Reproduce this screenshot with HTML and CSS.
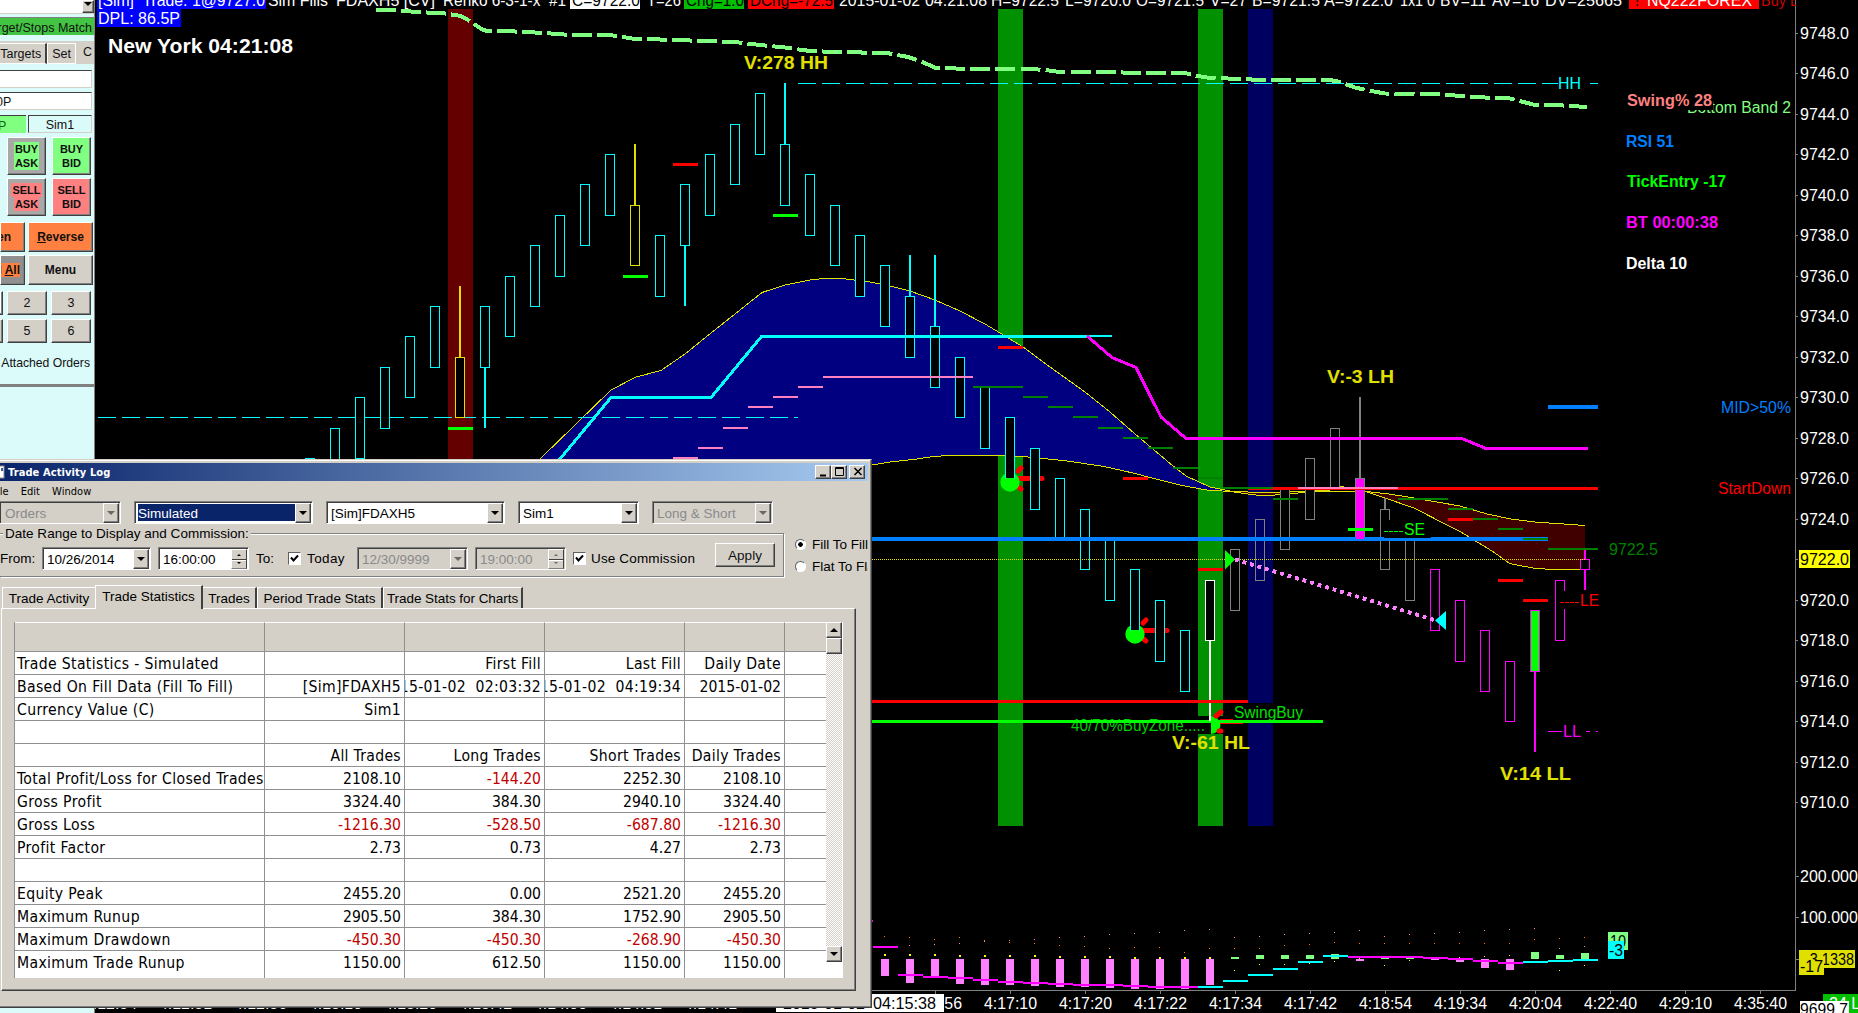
FILE: index.html
```html
<!DOCTYPE html>
<html lang="en">
<head>
  <meta charset="UTF-8">
  <meta name="viewport" content="width=device-width, initial-scale=1.0">
  <title>Trade Activity Log</title>
  <link rel="stylesheet" href="styles.css">
</head>
<body>
  <div class="workspace">

    <!-- Order entry panel -->
    <div class="order-panel">
      <div class="symbol-row"><span class="arrow-btn"><i class="down"></i></span></div>
      <div class="match-bar">Target/Stops Match</div>
      <div class="mini-tabs">
        <span class="mini-tab">Targets</span>
        <span class="mini-tab">Set</span>
        <span class="mini-tab current">C</span>
      </div>
      <div class="field"></div>
      <div class="field">0P</div>
      <div class="account-row">
        <span class="profit">P</span>
        <span class="account">Sim1</span>
      </div>
      <div class="pair">
        <button class="btn big gray"><span class="hl-buy">BUY</span><span class="hl-buy">ASK</span></button>
        <button class="btn big buy"><span>BUY</span><span>BID</span></button>
      </div>
      <div class="pair">
        <button class="btn big gray"><span class="hl-sell">SELL</span><span class="hl-sell">ASK</span></button>
        <button class="btn big sell"><span>SELL</span><span>BID</span></button>
      </div>
      <div class="wide-pair first">
        <button class="btn wide orange left">Flatten</button>
        <button class="btn wide orange"><u>R</u>everse</button>
      </div>
      <div class="wide-pair">
        <button class="btn wide dark left"><span class="hl-all">Cancel <u>A</u>ll</span></button>
        <button class="btn wide">Menu</button>
      </div>
      <div class="numbers">
        <button class="btn num pressed">1</button>
        <button class="btn num">2</button>
        <button class="btn num">3</button>
        <button class="btn num">4</button>
        <button class="btn num">5</button>
        <button class="btn num">6</button>
      </div>
      <div class="attached">Attached Orders</div>
    </div>

    <!-- Price chart, drawn by chart.js -->
    <svg class="chart" id="chart" viewBox="95 0 1763 1013" width="1763" height="1013"></svg>
  </div>

  <!-- Trade Activity Log window -->
  <div class="log-window">
    <div class="title-bar">
      <svg class="app-icon" width="14" height="14" viewBox="0 0 14 14">
        <rect x="0" y="1" width="13" height="12" fill="#fff" stroke="#888"/>
        <path d="M8 3v4M11 3v3" stroke="#0a246a" stroke-width="1.5"/>
      </svg>
      <span class="title">Trade Activity Log</span>
      <span class="win-btn"><svg width="10" height="10"><path d="M1 8.5h6" stroke="#000" stroke-width="2"/></svg></span>
      <span class="win-btn"><svg width="10" height="10"><path d="M.5 .5h8v8h-8zM0 1.5h9" fill="none" stroke="#000"/></svg></span>
      <span class="win-btn close"><svg width="10" height="10"><path d="M1.5 1l7 7M8.5 1l-7 7" stroke="#000" stroke-width="1.6"/></svg></span>
    </div>
    <div class="menu-bar"><span>File</span><span>Edit</span><span>Window</span></div>

    <div class="filters">
      <div class="combo off orders">Orders<span class="arrow-btn"><i class="down"></i></span></div>
      <div class="combo selected simulated"><b>Simulated</b><span class="arrow-btn"><i class="down"></i></span></div>
      <div class="combo simulated">[Sim]FDAXH5<span class="arrow-btn"><i class="down"></i></span></div>
      <div class="combo acct">Sim1<span class="arrow-btn"><i class="down"></i></span></div>
      <div class="combo off acct">Long &amp; Short<span class="arrow-btn"><i class="down"></i></span></div>
    </div>

    <div class="range-row">
      <div class="range-box">
        <div class="range-title">Date Range to Display and Commission:</div>
        <label class="from">From:</label>
        <div class="combo date">10/26/2014<span class="arrow-btn"><i class="down"></i></span></div>
        <div class="combo time">16:00:00<span class="spin"><i class="up"></i><i class="down"></i></span></div>
        <label class="to">To:</label>
        <span class="check"><svg width="9" height="9"><path d="M1 3.5l2.5 3L8 1.5" fill="none" stroke="#000" stroke-width="2"/></svg></span>
        <label class="today">Today</label>
        <div class="combo off date2">12/30/9999<span class="arrow-btn"><i class="down"></i></span></div>
        <div class="combo off time">19:00:00<span class="spin"><i class="up"></i><i class="down"></i></span></div>
        <span class="check second"><svg width="9" height="9"><path d="M1 3.5l2.5 3L8 1.5" fill="none" stroke="#000" stroke-width="2"/></svg></span>
        <label class="commission">Use Commission</label>
        <button class="btn apply">Apply</button>
      </div>
      <div class="radios">
        <label><span class="radio on"></span>Fill To Fill</label>
        <label><span class="radio"></span>Flat To Flat</label>
      </div>
    </div>

    <div class="tabs">
      <span class="tab t1">Trade Activity</span>
      <span class="tab active t2">Trade Statistics</span>
      <span class="tab t3">Trades</span>
      <span class="tab t4">Period Trade Stats</span>
      <span class="tab t5">Trade Stats for Charts</span>
    </div>

    <div class="tab-page">
      <div class="grid-box">
        <table class="stats">
          <colgroup><col class="c-name"><col class="c-val"><col class="c-val"><col class="c-val"><col class="c-day"><col></colgroup>
          <tr class="head"><td></td><td></td><td></td><td></td><td></td><td></td></tr>
          <tr class="words"><td>Trade Statistics - Simulated</td><td></td><td>First Fill</td><td>Last Fill</td><td>Daily Date</td><td></td></tr>
          <tr class="words"><td>Based On Fill Data (Fill To Fill)</td><td>[Sim]FDAXH5</td><td><div class="cut">2015-01-02&nbsp; 02:03:32</div></td><td><div class="cut">2015-01-02&nbsp; 04:19:34</div></td><td class="day">2015-01-02</td><td></td></tr>
          <tr class="words"><td>Currency Value (C)</td><td>Sim1</td><td></td><td></td><td></td><td></td></tr>
          <tr><td></td><td></td><td></td><td></td><td></td><td></td></tr>
          <tr class="words"><td></td><td>All Trades</td><td>Long Trades</td><td>Short Trades</td><td>Daily Trades</td><td></td></tr>
          <tr><td>Total Profit/Loss for Closed Trades</td><td>2108.10</td><td class="neg">-144.20</td><td>2252.30</td><td>2108.10</td><td></td></tr>
          <tr><td>Gross Profit</td><td>3324.40</td><td>384.30</td><td>2940.10</td><td>3324.40</td><td></td></tr>
          <tr><td>Gross Loss</td><td class="neg">-1216.30</td><td class="neg">-528.50</td><td class="neg">-687.80</td><td class="neg">-1216.30</td><td></td></tr>
          <tr><td>Profit Factor</td><td>2.73</td><td>0.73</td><td>4.27</td><td>2.73</td><td></td></tr>
          <tr><td></td><td></td><td></td><td></td><td></td><td></td></tr>
          <tr><td>Equity Peak</td><td>2455.20</td><td>0.00</td><td>2521.20</td><td>2455.20</td><td></td></tr>
          <tr><td>Maximum Runup</td><td>2905.50</td><td>384.30</td><td>1752.90</td><td>2905.50</td><td></td></tr>
          <tr><td>Maximum Drawdown</td><td class="neg">-450.30</td><td class="neg">-450.30</td><td class="neg">-268.90</td><td class="neg">-450.30</td><td></td></tr>
          <tr class="last"><td>Maximum Trade Runup</td><td>1150.00</td><td>612.50</td><td>1150.00</td><td>1150.00</td><td></td></tr>
        </table>
        <div class="scrollbar">
          <span class="scroll-btn"><i class="up"></i></span>
          <span class="scroll-btn thumb"></span>
          <span class="scroll-track"></span>
          <span class="scroll-btn"><i class="down"></i></span>
        </div>
      </div>
    </div>
  </div>

  <script src="chart.js"></script>
</body>
</html>
```
FILE: styles.css
```css
* {
  box-sizing: border-box;
}

body {
  margin: 0;
  background: #000;
  font-family: "Liberation Sans", Arial, sans-serif;
  width: 1858px;
  height: 1013px;
  overflow: hidden;
  position: relative;
}

.workspace {
  display: flex;
  height: 1013px;
}

/* Order panel */
.order-panel {
  width: 95px;
  height: 1013px;
  flex: none;
  background: #dbfafa;
  border-right: 1px solid #808080;
  overflow: hidden;
  font-size: 12.5px;
  color: #111;
}

.symbol-row {
  height: 14px;
  background: #fff;
  border-bottom: 1px solid #d4d0c8;
  display: flex;
  justify-content: flex-end;
}

.symbol-row .arrow-btn {
  width: 12px;
  height: 13px;
  padding-bottom: 5px;
}

.match-bar {
  margin-top: 3px;
  height: 18px;
  background: #43c443;
  border-top: 1px solid #808080;
  display: flex;
  justify-content: flex-end;
  align-items: center;
  padding: 2px 2px 0 0;
  white-space: nowrap;
}

.mini-tabs {
  margin-top: 6px;
  height: 23px;
  background: #d4d0c8;
  display: flex;
  justify-content: flex-end;
  align-items: flex-end;
}

.mini-tab {
  height: 21px;
  border-top: 1px solid #fff;
  border-right: 2px solid #404040;
  border-bottom: 1px solid #fff;
  line-height: 20px;
  padding: 0 4px;
}

.mini-tab + .mini-tab {
  border-left: 1px solid #fff;
  border-right: 1px solid #fff;
  width: 29px;
}

.mini-tab.current {
  width: 18px;
  height: 23px;
  border: none;
  padding-left: 7px;
  line-height: 22px;
}

.field {
  margin: 6px 2px 0 0;
  height: 18px;
  background: #fff;
  border-top: 1px solid #404040;
  border-right: 1px solid #d4d0c8;
  border-bottom: 1px solid #d4d0c8;
  line-height: 19px;
  text-indent: -4px;
}

.field + .field {
  margin-top: 4px;
}

.account-row {
  display: flex;
  gap: 2px;
  margin: 5px 2px 0 0;
  height: 18px;
  line-height: 20px;
}

.profit {
  width: 26px;
  background: #80ff80;
  border-top: 1px solid #404040;
  text-indent: -2px;
  color: #186018;
}

.account {
  flex: 1;
  border: 1px solid #404040;
  border-right-color: #d4d0c8;
  border-bottom-color: #d4d0c8;
  text-align: center;
  line-height: 19px;
}

.btn {
  font-family: inherit;
  font-weight: bold;
  font-size: 12px;
  color: #111;
  background: #d4d0c8;
  border: 1px solid;
  border-color: #fff #404040 #404040 #fff;
  box-shadow: inset -1px -1px 0 #808080;
  padding: 0;
  border-radius: 0;
  white-space: nowrap;
}

.pair {
  display: flex;
  justify-content: flex-end;
  gap: 6px;
  margin: 4px 3px 0 0;
}

.pair + .pair {
  margin-top: 3px;
}

.big {
  width: 39px;
  height: 38px;
  font-size: 11px;
  display: flex;
  flex-direction: column;
  justify-content: center;
  align-items: center;
  line-height: 14px;
}

.big span {
  padding: 0 1px;
}

.gray { background: #a8a8a8; }
.dark { background: #909090; }
.buy, .hl-buy { background: #80ff80; }
.sell, .hl-sell { background: #ff8080; }
.orange, .hl-all { background: #ff8040; }

.wide-pair {
  display: flex;
  gap: 3px;
  margin-top: 3px;
}

.wide-pair.first {
  margin-top: 6px;
}

.wide {
  width: 65px;
  height: 30px;
  flex: none;
}

.wide.left {
  width: 25px;
  display: flex;
  justify-content: flex-end;
  align-items: center;
  overflow: hidden;
  padding-right: 4px;
}

.first .left {
  padding-right: 13px;
}

.numbers {
  display: grid;
  grid-template-columns: 40px 40px 40px;
  gap: 4px;
  margin: 6px 0 0 -37px;
}

.num {
  height: 24px;
  font-weight: normal;
  font-size: 12.5px;
}

.pressed {
  background: #fff;
}

.attached {
  height: 44px;
  padding: 13px 4px 0 0;
  text-align: right;
  white-space: nowrap;
  border-bottom: 3px solid #808080;
  font-size: 12.2px;
}

.down, .up {
  width: 0;
  height: 0;
  border: 4px solid transparent;
  border-bottom-width: 0;
  border-top-color: #000;
}

.up {
  border-bottom: 4px solid #000;
  border-top: 0;
}

/* Log window */
.log-window {
  position: absolute;
  left: 0;
  top: 459px;
  width: 872px;
  height: 549px;
  background: #d4d0c8;
  border-top: 1px solid #d4d0c8;
  border-right: 1px solid #404040;
  border-bottom: 1px solid #404040;
  box-shadow: inset -1px -1px 0 #808080, inset 0 1px 0 #fff;
  padding: 3px 3px 0 0;
  overflow: hidden;
  font-size: 13.5px;
  color: #000;
}

.title-bar {
  height: 18px;
  background: linear-gradient(90deg, #0a246a, #a6caf0);
  display: flex;
  align-items: center;
  padding-right: 3px;
}

.app-icon {
  flex: none;
  margin-left: -9px;
}

.title {
  flex: 1;
  margin-left: 3px;
  color: #fff;
  font: bold 11px "DejaVu Sans Condensed", "DejaVu Sans", sans-serif;
  letter-spacing: 0.1px;
}

.win-btn {
  width: 16px;
  height: 14px;
  background: #d4d0c8;
  border: 1px solid;
  border-color: #fff #404040 #404040 #fff;
  box-shadow: inset -1px -1px 0 #808080;
  padding: 1px 0 0 3px;
  line-height: 0;
}

.close {
  margin-left: 2px;
}

.menu-bar {
  height: 20px;
  display: flex;
  align-items: center;
  gap: 12px;
  margin-left: -8px;
  font: 11px "DejaVu Sans Condensed", "DejaVu Sans", sans-serif;
  letter-spacing: 0.05px;
}

.filters {
  display: flex;
  gap: 13px;
  margin-left: -1px;
}

.combo {
  height: 23px;
  background: #fff;
  border: 1px solid;
  border-color: #808080 #fff #fff #808080;
  box-shadow: inset 1px 1px 0 #404040;
  display: flex;
  align-items: center;
  padding: 1px 1px 0 4px;
  white-space: nowrap;
  flex: none;
}

.combo b {
  background: #0a246a;
  color: #fff;
  font-weight: normal;
  flex: 1;
  align-self: stretch;
  margin: 1px 0 2px -1px;
  line-height: 19px;
}

.combo .arrow-btn, .combo .spin {
  margin-left: auto;
}

.off {
  background: #d4d0c8;
  color: #8a8a8a;
}

.off i {
  opacity: 0.5;
}

.arrow-btn {
  width: 16px;
  height: 20px;
  background: #d4d0c8;
  border: 1px solid;
  border-color: #fff #404040 #404040 #fff;
  box-shadow: inset -1px -1px 0 #808080;
  display: flex;
  align-items: center;
  justify-content: center;
}

.orders { width: 122px; }
.simulated { width: 179px; }
.acct { width: 121px; }
.combo.orders { padding-left: 5px; }

.spin {
  width: 16px;
  height: 20px;
  display: flex;
  flex-direction: column;
  justify-content: space-between;
  align-items: center;
  padding: 4px 0;
  background: linear-gradient(#d4d0c8 9px, #404040 9px, #404040 10px, #fff 10px, #fff 11px, #d4d0c8 11px);
  border: 1px solid;
  border-color: #fff #404040 #808080 #fff;
}

.spin i {
  border-width: 2px;
}

.spin .up { border-top-width: 0; }
.spin .down { border-bottom-width: 0; }

.range-row {
  display: flex;
  height: 44px;
  margin-top: 9px;
}

.range-box {
  position: relative;
  width: 784px;
  height: 44px;
  border: 1px solid #808080;
  border-left: none;
  box-shadow: 1px 1px 0 #fff, inset 0 1px 0 #fff;
  display: flex;
  align-items: center;
  padding-top: 7px;
  flex: none;
}

/* caption sits on top of the frame line */
.range-title {
  position: absolute;
  top: -8px;
  left: 3px;
  padding: 0 2px;
  background: #d4d0c8;
  white-space: nowrap;
  letter-spacing: 0.02px;
}

.from { width: 42px; }
.date { width: 109px; }
.date2 { width: 111px; }
.time { width: 91px; margin-left: 7px; }
.to { margin-left: 7px; width: 32px; }
.today { margin-left: 6px; width: 50px; letter-spacing: 0.4px; }

.check {
  width: 13px;
  height: 13px;
  background: #fff;
  border: 1px solid;
  border-color: #606060 #fff #fff #606060;
  display: flex;
  align-items: center;
  justify-content: center;
  flex: none;
}

.second { margin-left: 7px; }
.commission { margin-left: 5px; width: 124px; letter-spacing: 0.15px; }

.apply {
  width: 60px;
  height: 24px;
  font-size: 13.5px;
  font-weight: normal;
  margin-top: -7px;
}

.radios {
  margin: 0 0 0 11px;
  width: 73px;
  overflow: hidden;
  white-space: nowrap;
}

.radios label {
  display: flex;
  align-items: center;
  height: 22px;
}

.radio {
  width: 11px;
  height: 11px;
  border-radius: 50%;
  border: 1px solid;
  border-color: #606060 #fff #fff #606060;
  background: #fff;
  margin-right: 6px;
  flex: none;
}

.radio.on {
  background: radial-gradient(circle, #000 2px, #fff 2.6px);
}

.tabs {
  display: flex;
  align-items: flex-end;
  height: 24px;
  margin: 7px 0 0 2px;
}

.tab {
  height: 21px;
  border-top: 1px solid #fff;
  border-left: 1px solid #fff;
  border-right: 2px solid #404040;
  text-align: center;
  line-height: 21px;
  white-space: nowrap;
}

.tab.active {
  height: 24px;
  line-height: 22px;
  position: relative;
  top: 1px;
  background: #d4d0c8;
}

.t1 { width: 93px; border-right: none; }
.t2 { width: 108px; }
.t3 { width: 54px; border-left: none; }
.t4 { width: 126px; }
.t5 { width: 140px; letter-spacing: -0.05px; }

.tab-page {
  width: 855px;
  height: 383px;
  margin-left: 1px;
  border: 1px solid;
  border-color: #fff #404040 #404040 #fff;
  box-shadow: inset -1px -1px 0 #808080;
  padding: 13px 0 0 12px;
}

.grid-box {
  display: flex;
  width: 829px;
  height: 356px;
  background: #fff;
  overflow: hidden;
}

.stats {
  width: 812px;
  height: 356px;
  table-layout: fixed;
  border-collapse: separate;
  border-spacing: 0;
  border-left: 1px solid #909090;
  font: 15.6px "DejaVu Sans Condensed", "DejaVu Sans", sans-serif;
  flex: none;
}

.c-name { width: 250px; }
.c-val { width: 140px; }
.c-day { width: 100px; }

.stats td {
  height: 23px;
  padding: 2px 3px 0 2px;
  border-right: 1px solid #909090;
  border-bottom: 1px solid #909090;
  line-height: 20px;
  text-align: right;
  vertical-align: top;
  white-space: nowrap;
  overflow: hidden;
}

.stats td:first-child {
  text-align: left;
  padding-right: 0;
  letter-spacing: 0.36px;
}

.words td {
  letter-spacing: 0.32px;
}

.stats td.day {
  letter-spacing: 0;
}

.stats td:last-child {
  border-right: none;
}

.stats .head td {
  height: 30px;
  background: #d4d0c8;
  border-top: 1px solid #fff;
}

.stats .last td {
  height: 27px;
  border-bottom: none;
}

.cut {
  display: flex;
  justify-content: flex-end;
  overflow: hidden;
  margin-left: -2px;
}

.neg {
  color: #c00000;
}

.scrollbar {
  width: 16px;
  height: 340px;
  display: flex;
  flex-direction: column;
}

.scroll-btn {
  height: 16px;
  background: #d4d0c8;
  border: 1px solid;
  border-color: #fff #404040 #404040 #fff;
  box-shadow: inset -1px -1px 0 #808080;
  display: flex;
  align-items: center;
  justify-content: center;
}

.scroll-track {
  flex: 1;
  background: repeating-conic-gradient(#d4d0c8 0 25%, #fff 0 50%) 0 0 / 2px 2px;
}

/* Chart */
.chart {
  display: block;
  background: #000;
}

.chart text {
  font-family: "Liberation Sans", Arial, sans-serif;
  font-size: 16px;
  white-space: pre;
}

.chart text.bold {
  font-weight: bold;
}

.chart text.pivot {
  font-weight: bold;
  font-size: 19px;
}

.chart text.clock {
  font-weight: bold;
  font-size: 21px;
}
```
FILE: chart.js
```js
const svg = document.getElementById("chart");
const NS = "http://www.w3.org/2000/svg";

const CYAN = "#00ffff", YELLOW = "#e0e000", GRAY = "#808080", PINK = "#ff80ff", MAGENTA = "#ff00ff";

function add(tag, attrs) {
  const el = document.createElementNS(NS, tag);
  for (const key in attrs) el.setAttribute(key, attrs[key]);
  svg.appendChild(el);
  return el;
}

function rect(x, y, w, h, fill) {
  add("rect", { x: x, y: y, width: w, height: h, fill: fill, "shape-rendering": "crispEdges" });
}

function line(points, color, width, dash) {
  const attrs = { points: points, fill: "none", stroke: color, "stroke-width": width, "shape-rendering": "crispEdges" };
  if (dash) attrs["stroke-dasharray"] = dash;
  add("polyline", attrs);
}

function text(x, y, str, color, len, cls) {
  const attrs = { x: x, y: y, fill: color };
  if (len) { attrs.textLength = len; attrs.lengthAdjust = "spacingAndGlyphs"; }
  if (cls) attrs["class"] = cls;
  add("text", attrs).textContent = str;
}

// price to pixel row
function py(price) {
  return Math.floor(33 + (9748 - price) * 20.26);
}

// [x, y, width] segments
function dashes(list, color, thick) {
  list.forEach(d => rect(d[0], d[1], d[2] || 25, thick, color));
}

// Background bands
rect(448, 9, 25, 817, "#640000");
rect(998, 9, 25, 817, "#009000");
rect(1198, 9, 25, 817, "#009000");
rect(1248, 9, 25, 817, "#000060");

// Clouds
const top1 = "530,468 540,459 611,390 636,377 661,370.5 685,354 711,333 735,314 762,292.5 785,285 810,280 823,278.5 842,278.5 870,282 890,286 910,291 935,300 960,311 985,324 1000,333 1023,347 1050,367 1085,392 1110,412 1135,434 1160,455 1173,466 1187,476.5 1210,487 1230,491";
const low1 = "1230,491.5 1207,490 1183,485.7 1153,478.3 1133,473 1103,466.3 1065,460.7 1023,456.5 998,455.5 950,455.5 933,456.5 917,459 890,462 872,465 700,500";
const top2 = "1366,491.5 1389,494 1414,498 1460,506 1487,514 1511,519 1535,522 1585,525.5";
const low2 = "1585,569.3 1549,569.3 1533,568 1510,563.7 1492,551 1462,532.7 1414,508 1366,491.5";
add("polygon", { points: top1 + " " + low1, fill: "#000080" });
add("polygon", { points: top2 + " " + low2, fill: "#400000" });
add("polygon", { points: "1210,487 1230,491 1257,492.5 1273,492.5 1306,491.5 1273,495 1258,495 1230,491.5", fill: "#400000" });
line(top1 + " 1257,492.5 1273,492.5 1306,491.5 1330,490 1337,486 1341,486.5 1366,491.5 " + top2, YELLOW, 1);
line(low1, YELLOW, 1);
line("1230,491.5 1248,494 1258,495.3 1273,495.2 1290,493.5 1330,491 1366,491", YELLOW, 1);
line(low2, YELLOW, 1);

// Upper band
line("376,9.5 397,10.5 418,12 445,13.5 461,16 468,20 483,30 488,31 515,31.5 545,33 570,35 610,35 635,39 660,39.5 735,42 760,45 785,47.5 810,51 835,52 887,53 908,57 920,61 936,68 975,69 1030,69 1045,70 1060,72 1185,73 1195,75.5 1210,78 1245,79 1258,80 1330,80 1340,82 1355,87.5 1366,90 1385,93.5 1440,94.5 1485,97.5 1510,98.5 1535,105 1560,105.3 1587,107", "#80ff80", 4, "20 5.1");

line("798,83.5 1558,83.5", CYAN, 1, "18 6");
line("1590,83.5 1598,83.5", CYAN, 1);
line("98,417.5 798,417.5", CYAN, 1, "18 6");

// Entry arrows
function arrow(x, y) {
  add("path", { d: `M${x + 8} ${y - 3.5}h24M${x + 8} ${y - 11}l3 -3M${x + 6} ${y + 3}l5 4`, stroke: "#ff0000", "stroke-width": 5, "stroke-linecap": "round", fill: "none" });
  add("circle", { cx: x, cy: y, r: 9.7, fill: "#00ff00" });
}
arrow(1010, 482);
arrow(1135, 634);

// Bars: [color, body top, body bottom, high, low, fill]
const bars = [
  [CYAN, 9727, 9724], [CYAN, 9728.5, 9725.5], [CYAN, 9730, 9727], [CYAN, 9731.5, 9728.5],
  [CYAN, 9733, 9730], [CYAN, 9734.5, 9731.5], [YELLOW, 9732, 9729, 9735.5], [CYAN, 9734.5, 9731.5, 0, 9728.5],
  [CYAN, 9736, 9733], [CYAN, 9737.5, 9734.5], [CYAN, 9739, 9736], [CYAN, 9740.5, 9737.5],
  [CYAN, 9742, 9739], [YELLOW, 9739.5, 9736.5, 9742.5], [CYAN, 9738, 9735], [CYAN, 9740.5, 9737.5, 0, 9734.5],
  [CYAN, 9742, 9739], [CYAN, 9743.5, 9740.5], [CYAN, 9745, 9742], [CYAN, 9742.5, 9739.5, 9745.5],
  [CYAN, 9741, 9738], [CYAN, 9739.5, 9736.5], [CYAN, 9738, 9735], [CYAN, 9736.5, 9733.5],
  [CYAN, 9735, 9732, 9737], [CYAN, 9733.5, 9730.5, 9737], [CYAN, 9732, 9729], [CYAN, 9730.5, 9727.5],
  [CYAN, 9729, 9726], [CYAN, 9727.5, 9724.5], [CYAN, 9726, 9723], [CYAN, 9724.5, 9721.5],
  [CYAN, 9723, 9720], [CYAN, 9721.5, 9718.5], [CYAN, 9720, 9717], [CYAN, 9718.5, 9715.5],
  ["#ffffff", 9721, 9718, 0, 9714], [GRAY, 9722.5, 9719.5], [GRAY, 9724, 9721], [GRAY, 9725.5, 9722.5],
  [GRAY, 9727, 9724], [GRAY, 9728.5, 9725.5], [GRAY, 9726, 9723, 9730, 0, MAGENTA], [GRAY, 9724.5, 9721.5, 9725],
  [GRAY, 9723, 9720], [MAGENTA, 9721.5, 9718.5], [MAGENTA, 9720, 9717], [MAGENTA, 9718.5, 9715.5],
  [MAGENTA, 9717, 9714], [MAGENTA, 9719.5, 9716.5, 0, 9712.5, "#00ff00"], [MAGENTA, 9721, 9718], [MAGENTA, 9722, 9721.5, 9722.5, 9720.5]
];
bars.forEach((b, i) => {
  const x = 310 + i * 25;
  const y1 = py(b[1]), y2 = py(b[2]);
  if (b[3]) rect(x - 1, py(b[3]), 2, y1 - py(b[3]), b[0]);
  if (b[4]) rect(x - 1, y2, 2, py(b[4]) - y2, b[0]);
  const fill = b[5] || (x == 1260 ? "#000060" : "#000");
  add("rect", { x: x - 4.5, y: y1 + 0.5, width: 9, height: y2 - y1, fill: fill, stroke: b[0], "stroke-width": 1, "shape-rendering": "crispEdges" });
});
// bars over a marker stay open at the bottom
rect(1006, 478, 8, 1, "#00ff00");
rect(1131, 630, 8, 1, "#00ff00");

// Trailing stops
line("550,471 560,459 611,397.5 711,397.5 761.5,336.5 1087,336.5", CYAN, 3);
line("1085,336 1112,336", CYAN, 2);
line("1087,336 1112,357.5 1136,367.5 1161,417 1186,438.5 1462,438.5 1486,448.5 1588,448.5", MAGENTA, 3);

// Midline
dashes([[673, 457], [698, 447], [723, 427], [748, 406], [773, 396], [798, 386], [823, 376, 150]], "#ff80c0", 2);
rect(1248, 487, 350, 3, "#ff0000");
dashes([[973, 386, 50], [1023, 396], [1048, 406], [1073, 416], [1098, 427], [1123, 437], [1148, 447], [1173, 467], [1198, 477], [1223, 487, 50], [1273, 498]], "#008000", 2);
rect(1298, 487, 100, 2, "#ff80c0");

// Signals
dashes([[673, 163], [998, 346], [1123, 477], [1198, 568], [1448, 518], [1498, 579], [1523, 599]], "#ff0000", 3);
dashes([[448, 427], [623, 275], [773, 214]], "#00ff00", 3);

// Levels
rect(872, 537, 676, 4, "#0080ff");
rect(1548, 405, 50, 4, "#0080ff");
rect(1356, 520, 8, 19, MAGENTA);
rect(1348, 528, 25, 3, "#00ff00");
dashes([[1398, 498, 50], [1448, 508], [1473, 518], [1498, 528], [1523, 538], [1548, 548, 50]], "#008000", 2);
line("872,559.5 1585,559.5", YELLOW, 1, "1 1");
rect(872, 700, 376, 3, "#ff0000");

// Closed trade
line("1235,559.5 1436,620.5", PINK, 4, "3.8 4.05");
add("polygon", { points: "1225,550 1225,569.5 1235,559.5", fill: "#00ff00" });
add("polygon", { points: "1446,611 1446,630 1435,620.5", fill: CYAN });

// Labels with black backing
rect(1233, 703, 72, 17, "#000");
text(1234, 718, "SwingBuy", "#00e000", 69);
rect(1070, 716, 153, 18, "#000");
text(1071, 731, "40/70%BuyZone.....", "#00d000", 134);
rect(872, 720, 451, 3, "#00ff00");
rect(1209, 716, 2, 5, "#ffffff");
add("path", { d: "M1211 716a9.5 9 0 0 1 0 18z", fill: "#00ff00" });
add("path", { d: "M1216 716l5 -4M1219 731h2", stroke: "#ff0000", "stroke-width": 5, "stroke-linecap": "round" });
rect(1220, 719, 13, 1, "#ff0000");
rect(1220, 723, 23, 1, "#ff0000");

rect(1384, 520, 47, 18, "#000");
line("1384,531.5 1404,531.5", "#00ff00", 1, "4 1");
text(1404, 535, "SE", "#00ff00", 21);
rect(1560, 591, 38, 18, "#000");
line("1560,602.5 1580,602.5", "#ff0000", 1, "4 1");
text(1580, 606, "LE", "#ff0000", 19);
line("1548,731.5 1562,731.5", MAGENTA, 1);
text(1563, 737, "LL", MAGENTA, 18);
line("1586,731.5 1590,731.5", MAGENTA, 1);
line("1596,731.5 1598,731.5", MAGENTA, 1);
text(1558, 89, "HH", CYAN, 23);

text(744, 68.5, "V:278 HH", YELLOW, 84, "pivot");
text(1327, 382.5, "V:-3 LH", YELLOW, 67, "pivot");
text(1172, 749, "V:-61 HL", YELLOW, 78, "pivot");
text(1500, 780, "V:14 LL", YELLOW, 71, "pivot");

text(1687, 113, "Bottom Band 2", "#80ff80", 104);
rect(1627, 92, 86, 18, "#000");
text(1627, 106, "Swing% 28", "#ff8080", 85, "bold");
text(1626, 147, "RSI 51", "#0080ff", 48, "bold");
text(1627, 187, "TickEntry -17", "#00ff00", 99, "bold");
text(1626, 228, "BT 00:00:38", MAGENTA, 92, "bold");
text(1626, 269, "Delta 10", "#ffffff", 61, "bold");
text(1721, 413, "MID>50%", "#0080ff", 70);
text(1718, 494, "StartDown", "#ff0000", 73);
text(1609, 555, "9722.5", "#008000", 49);

// Order flow histogram: [y, height, color] from x = 885
const up = "#80ff80";
const flow = [
  [959, 17, PINK], [959, 24, PINK], [959, 17, PINK], [959, 25, PINK], [959, 26, PINK], [959, 26, PINK], [959, 27, PINK],
  [959, 28, PINK], [959, 28, PINK], [959, 29, PINK], [959, 30, PINK], [959, 30, PINK], [959, 30, PINK], [959, 26, PINK],
  [957, 2, up], [955, 4, up], [955, 4, up], [955, 4, up], [954, 5, up], [959, 2, PINK], [958, 1, up], [958, 1, up],
  [959, 1, PINK], [959, 3, PINK], [959, 9, PINK], [959, 11, PINK], [952, 7, up], [955, 4, up], [953, 6, up]
];
const orange = [936, 937, 939, 937, 940, 942, 943, 945, 946, 948, 947, 947, 952, 948, 948, 948, 945, 944, 942, 943, 943, 943, 943, 943, 943, 943, 939, 938, 937];
const pink = [0, 945, 944, 943, 941, 940, 939, 937, 936, 934, 933, 932, 930, 929, 937, 936, 934, 933, 932, 930, 936, 934, 933, 932, 930, 929, 928, 948, 946];
const yellow = [954, 954, 954, 955, 955, 955, 955, 956, 956, 956, 957, 957, 957, 957, 970, 964, 964, 963, 961, 958, 965, 960, 0, 957, 956, 955, 0, 970, 965];
flow.forEach((f, i) => {
  const x = 885 + i * 25;
  rect(x - 4, f[0], 8, f[1], f[2]);
  rect(x - 1, orange[i], 1, 1, "#ff8000");
  if (pink[i]) rect(x - 1, pink[i], 1, 1, "#ff80c0");
  if (yellow[i]) rect(x - 1, yellow[i], i < 14 ? 2 : 1, i < 14 ? 2 : 1, "#ffff00");
});

const avg = [946, 974, 976, 977, 979, 981, 982, 983, 984, 984, 985, 986, 986, 986, 980, 974, 968, 961, 955, 956, 956, 956, 957, 958, 960, 962, 961, 960, 959];
avg.forEach((y, i) => {
  const blue = (i > 12 && i < 19) || i > 25;
  rect(873 + i * 25, y, 25, 2, blue ? CYAN : MAGENTA);
});
rect(872, 920, 1, 2, MAGENTA);

rect(1608, 932, 20, 18, up);
text(1610, 947, "10", "#000", 16);
rect(1608, 941, 16, 18, CYAN);
text(1609, 956, "-3", "#000", 14);

// Price axis
rect(1795, 0, 1, 991, GRAY);
for (let p = 9748; p >= 9710; p -= 2) {
  rect(1796, py(p), 2, 1, GRAY);
  if (p == 9722) rect(1799, 550, 51, 18, "#ffff00");
  text(1800, py(p) + 6, p + ".0", p == 9722 ? "#000" : "#fff", 49);
}
rect(1796, 876, 3, 1, GRAY);
rect(1796, 917, 3, 1, GRAY);
rect(1796, 959, 3, 1, GRAY);
text(1800, 882, "200.000", "#fff");
text(1800, 923, "100.000", "#fff");
rect(1799, 950, 56, 18, YELLOW);
text(1805, 965, "-3.1338", "#000", 49);
rect(1799, 960, 25, 15, YELLOW);
text(1800, 972, "-17", "#000", 23);

// Time axis
rect(95, 990, 1701, 1, GRAY);
const times = ["4:12:54", "4:12:51", "4:12:56", "4:13:10", "4:13:20", "4:13:42", "4:14:00", "4:14:51", "4:14:41", "", "",
  "4:16:56", "4:17:10", "4:17:20", "4:17:22", "4:17:34", "4:17:42", "4:18:54", "4:19:34", "4:20:04", "4:22:40", "4:29:10", "4:35:40"];
times.forEach((t, i) => {
  const x = 110 + i * 75;
  rect(x, 990, 1, 4, GRAY);
  if (t) text(x - 26, 1009, t, "#fff", 53);
});
rect(776, 994, 168, 18, "#fff");
text(783, 1009, "2015-01-02", "#000", 82);
text(873, 1009, "04:15:38", "#000", 63);
rect(1823, 994, 35, 19, "#00c000");
text(1829, 1009, "24 L", "#fff");
rect(1800, 1001, 49, 12, "#fff");
text(1800, 1015, "9699.7", "#000", 48);

// Status line
rect(97, 0, 169, 9, "#0000ff");
rect(97, 9, 84, 18, "#0000ff");
rect(570, 0, 70, 9, "#fff");
rect(684, 0, 60, 9, "#00c000");
rect(748, 0, 86, 9, "#ff0000");
rect(1629, 0, 130, 9, "#ff0000");
[
  [98, "[Sim]  Trade: 1@9727.0", "#fff", 167], [268, "Sim Fills", "#fff", 60], [336, "FDAXH5 [CV]", "#fff", 99],
  [443, "Renko 6-3-1-x  #1", "#fff", 123], [572, "C=9722.0", "#000", 68], [647, "T=26", "#fff", 34],
  [686, "Chg=1.0", "#000", 58], [750, "DChg=-72.5", "#000", 83], [839, "2015-01-02", "#fff", 81],
  [925, "04:21:08", "#fff", 62], [991, "H=9722.5", "#fff", 68], [1065, "L=9720.0", "#fff", 66],
  [1136, "O=9721.5", "#fff", 68], [1210, "V=27", "#fff", 37], [1252, "B=9721.5", "#fff", 68],
  [1324, "A=9722.0", "#fff", 69], [1400, "1x1 0", "#fff", 35], [1440, "BV=11", "#fff", 46],
  [1492, "AV=16", "#fff", 47], [1545, "DV=25665", "#fff", 77], [1635, "!", "#000"],
  [1647, "NQ222FOREX", "#fff", 105], [1761, "Buy L", "#d00000", 37]
].forEach(s => text(s[0], 6, s[1], s[2], s[3]));
rect(1796, 0, 62, 9, "#000");
text(98, 24, "DPL: 86.5P", "#fff", 82);
text(108, 53, "New York 04:21:08", "#fff", 185, "clock");
```
